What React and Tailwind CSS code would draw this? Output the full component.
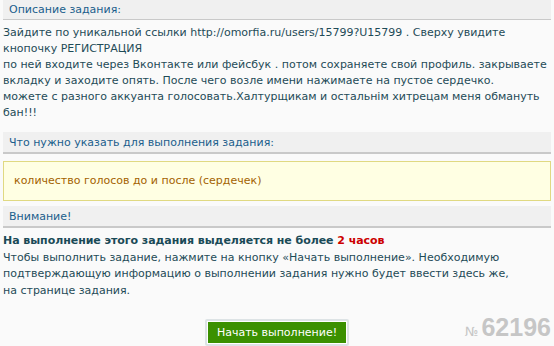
export default function App() {
  const font = { fontFamily: '"DejaVu Sans", Tahoma, sans-serif' };
  return (
    <div className="w-[554px] h-[346px] bg-[#fafafa] overflow-hidden" style={font}>
      <div className="ml-[3px] w-[548px] text-[11px] leading-[16px] text-[#1e4b57]">
        <div className="h-[20px] bg-[#f0f0f0] border-b-[1.5px] border-[#c9c9c9] pl-[6px] pt-[2px] text-[11px] text-[#1b5e8c]">Описание задания:</div>
        <div className="pt-[5px] pb-[11px]">
          Зайдите по уникальной ссылки http://omorfia.ru/users/15799?U15799 . Сверху увидите<br />
          кнопочку РЕГИСТРАЦИЯ<br />
          по ней входите через Вконтакте или фейсбук . потом сохраняете свой профиль. закрываете<br />
          вкладку и заходите опять. После чего возле имени нажимаете на пустое сердечко.<br />
          можете с разного аккуанта голосовать.Халтурщикам и остальнім хитрецам меня обмануть<br />
          бан!!!
        </div>
        <div className="h-[22px] bg-[#f0f0f0] border-b-2 border-[#c9c9c9] pl-[6px] pt-[3px] text-[11px] text-[#1b5e8c]">Что нужно указать для выполнения задания:</div>
        <div className="mt-[7px] h-[40px] bg-[#ffffe3] border border-[#e0d982] pl-[10px] flex items-center text-[11px] text-[#a36200]">количество голосов до и после (сердечек)</div>
        <div className="mt-[5px] h-[22px] bg-[#f0f0f0] border-b-2 border-[#c9c9c9] pl-[6px] pt-[3px] text-[11px] text-[#1b5e8c]">Внимание!</div>
        <div className="pt-[5px] leading-[16.5px]">
          <div className="font-bold text-[11px] tracking-[-0.05px] text-[#1a4a57]">На выполнение этого задания выделяется не более <span className="text-[#cc0000]">2 часов</span></div>
          <div>Чтобы выполнить задание, нажмите на кнопку «Начать выполнение». Необходимую<br />подтверждающую информацию о выполнении задания нужно будет ввести здесь же,<br />на странице задания.</div>
        </div>
        <div className="relative mt-[20px] h-[27px] flex justify-center">
          <div className="p-[2px] bg-[#dde3e5] rounded-[2px] w-[144px] h-[27px]">
            <div className="h-full border border-white bg-[#3b9000] text-white text-[11px] flex items-center justify-center">Начать выполнение!</div>
          </div>
          <div className="absolute right-[0px] top-[0px] text-[#c6c6c6] font-bold flex items-baseline">
            <span className="text-[13px] font-normal mr-[3px]">№</span>
            <span className="text-[25px]" style={{ fontFamily: '"Liberation Sans", Arial, sans-serif' }}>62196</span>
          </div>
        </div>
      </div>
    </div>
  );
}
